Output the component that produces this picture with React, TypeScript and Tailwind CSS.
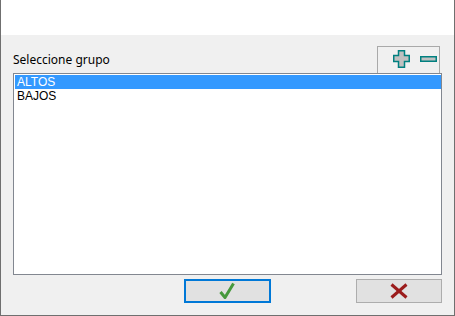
export default function App() {
  const groups = ["ALTOS", "BAJOS"];
  const selected = 0;

  return (
    <div
      className="w-[455px] h-[316px] flex flex-col border-x border-b border-[#6f6f6f] bg-[#f0f0f0] text-[12px] text-black"
      style={{ fontFamily: '"Noto Sans", "Liberation Sans", sans-serif' }}
    >
      <div className="h-[35px] bg-white shrink-0" />
      <div className="flex-1 flex flex-col px-3 pt-[11px]">
        <div className="flex items-end justify-between">
          <span className="leading-[16px] mb-[5px]">Seleccione grupo</span>
          <div className="w-[63px] h-[27px] mr-[2px] border-t border-x border-[#a9a9a9] flex items-start pl-[15px] pt-[3px]">
            <svg width="17" height="18" viewBox="0 0 17 18">
              <polygon
                points="5.5,0.75 11.5,0.75 11.5,5.5 16.25,5.5 16.25,11.5 11.5,11.5 11.5,17.25 5.5,17.25 5.5,11.5 0.75,11.5 0.75,5.5 5.5,5.5"
                fill="#c0c0c0"
                stroke="#008080"
                strokeWidth="1.5"
              />
            </svg>
            <svg width="17" height="6" viewBox="0 0 17 6" className="ml-[10px] mt-[6px]">
              <rect x="0.75" y="0.75" width="15.5" height="4.5" fill="#c0c0c0" stroke="#008080" strokeWidth="1.5" />
            </svg>
          </div>
        </div>
        <div
          className="h-[202px] bg-white border border-[#828790] pl-[1px] pt-[1px] text-[12px]"
          style={{ fontFamily: '"Liberation Sans", Arial, sans-serif' }}
        >
          {groups.map((g, i) => (
            <div
              key={g}
              className={`h-[14px] leading-[14px] pl-[2px] ${
                i === selected ? "bg-[#3399ff] text-white" : ""
              }`}
            >
              {g}
            </div>
          ))}
        </div>
        <div className="flex mt-[4px]">
          <button className="ml-[171px] w-[87px] h-[24px] border-2 border-[#0078d7] bg-[#e1e1e1] flex items-center justify-center">
            <svg width="16" height="18" viewBox="0 0 16 18">
              <polyline
                points="1.5,10 6,15.5 14.5,1.5"
                fill="none"
                stroke="#46993c"
                strokeWidth="3"
                strokeLinejoin="round"
              />
            </svg>
          </button>
          <button className="ml-[85px] w-[87px] h-[24px] border border-[#adadad] bg-[#e1e1e1] flex items-center justify-center">
            <svg width="18" height="16" viewBox="0 0 18 16">
              <line x1="1.5" y1="1.5" x2="16.5" y2="14.5" stroke="#9b1c1c" strokeWidth="3" />
              <line x1="16.5" y1="1.5" x2="1.5" y2="14.5" stroke="#9b1c1c" strokeWidth="3" />
            </svg>
          </button>
        </div>
      </div>
    </div>
  );
}
